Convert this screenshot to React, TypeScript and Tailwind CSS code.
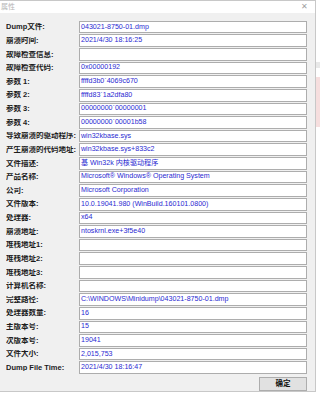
const rows: [string, string][] = [
  ["Dump文件:", "043021-8750-01.dmp"],
  ["崩溃时间:", "2021/4/30 18:16:25"],
  ["故障检查信息:", ""],
  ["故障检查代码:", "0x00000192"],
  ["参数 1:", "ffffd3b0`4069c670"],
  ["参数 2:", "ffffd83`1a2dfa80"],
  ["参数 3:", "00000000`00000001"],
  ["参数 4:", "00000000`00001b58"],
  ["导致崩溃的驱动程序:", "win32kbase.sys"],
  ["产生崩溃的代码地址:", "win32kbase.sys+833c2"],
  ["文件描述:", "基 Win32k 内核驱动程序"],
  ["产品名称:", "Microsoft® Windows® Operating System"],
  ["公司:", "Microsoft Corporation"],
  ["文件版本:", "10.0.19041.980 (WinBuild.160101.0800)"],
  ["处理器:", "x64"],
  ["崩溃地址:", "ntoskrnl.exe+3f5e40"],
  ["堆栈地址1:", ""],
  ["堆栈地址2:", ""],
  ["堆栈地址3:", ""],
  ["计算机名称:", ""],
  ["完整路径:", "C:\\WINDOWS\\Minidump\\043021-8750-01.dmp"],
  ["处理器数量:", "16"],
  ["主版本号:", "15"],
  ["次版本号:", "19041"],
  ["文件大小:", "2,015,753"],
  ["Dump File Time:", "2021/4/30 18:16:47"],
];

const font = {
  fontFamily: '"Liberation Sans", "Noto Sans CJK SC", sans-serif',
};

export default function App() {
  return (
    <div className="w-[320px] h-[394px] overflow-hidden bg-white flex" style={font}>
      <div className="w-[316px] h-[392px] shrink-0 flex flex-col border-t border-r border-b border-[#c8c8c8] bg-[#f0f0f0]">
        <div className="h-[12px] bg-white flex items-center justify-between pl-[1px] pr-[7px]">
          <span className="text-[7px] leading-none text-[#b4b4b4]">属性</span>
          <span className="text-[8px] leading-none text-[#a0a0a0]">✕</span>
        </div>
        <div className="flex flex-col gap-px pt-[8px] pl-[6px]">
          {rows.map(([label, value]) => (
            <div key={label} className="flex items-center h-[12.64px]">
              <div
                className={
                  "w-[73px] shrink-0 overflow-hidden leading-none text-[#1c1c1c] whitespace-nowrap " +
                  (label.startsWith("Dump File") ? "font-bold text-[7.5px]" : "font-semibold text-[7.5px]")
                }
              >
                {label}
              </div>
              <div className="w-[228px] shrink-0 h-full bg-white border border-[#adadad] flex items-center pl-[1px] overflow-hidden">
                <span className="text-[7.1px] leading-none text-[#2a2ad2] whitespace-nowrap">
                  {value}
                </span>
              </div>
            </div>
          ))}
        </div>
        <div className="flex justify-end pr-[8px] pt-[3px]">
          <button className="w-[48px] h-[14px] bg-[#e1e1e1] border border-[#adadad] text-[7.5px] font-bold leading-none text-[#101010]">
            确定
          </button>
        </div>
      </div>
      <div className="flex-1 flex flex-col pt-[62px] gap-[9px]">
        <div className="h-[6px] bg-[#e8e8e8]" />
        <div className="h-[50px] bg-[#f6dede]" />
      </div>
    </div>
  );
}
